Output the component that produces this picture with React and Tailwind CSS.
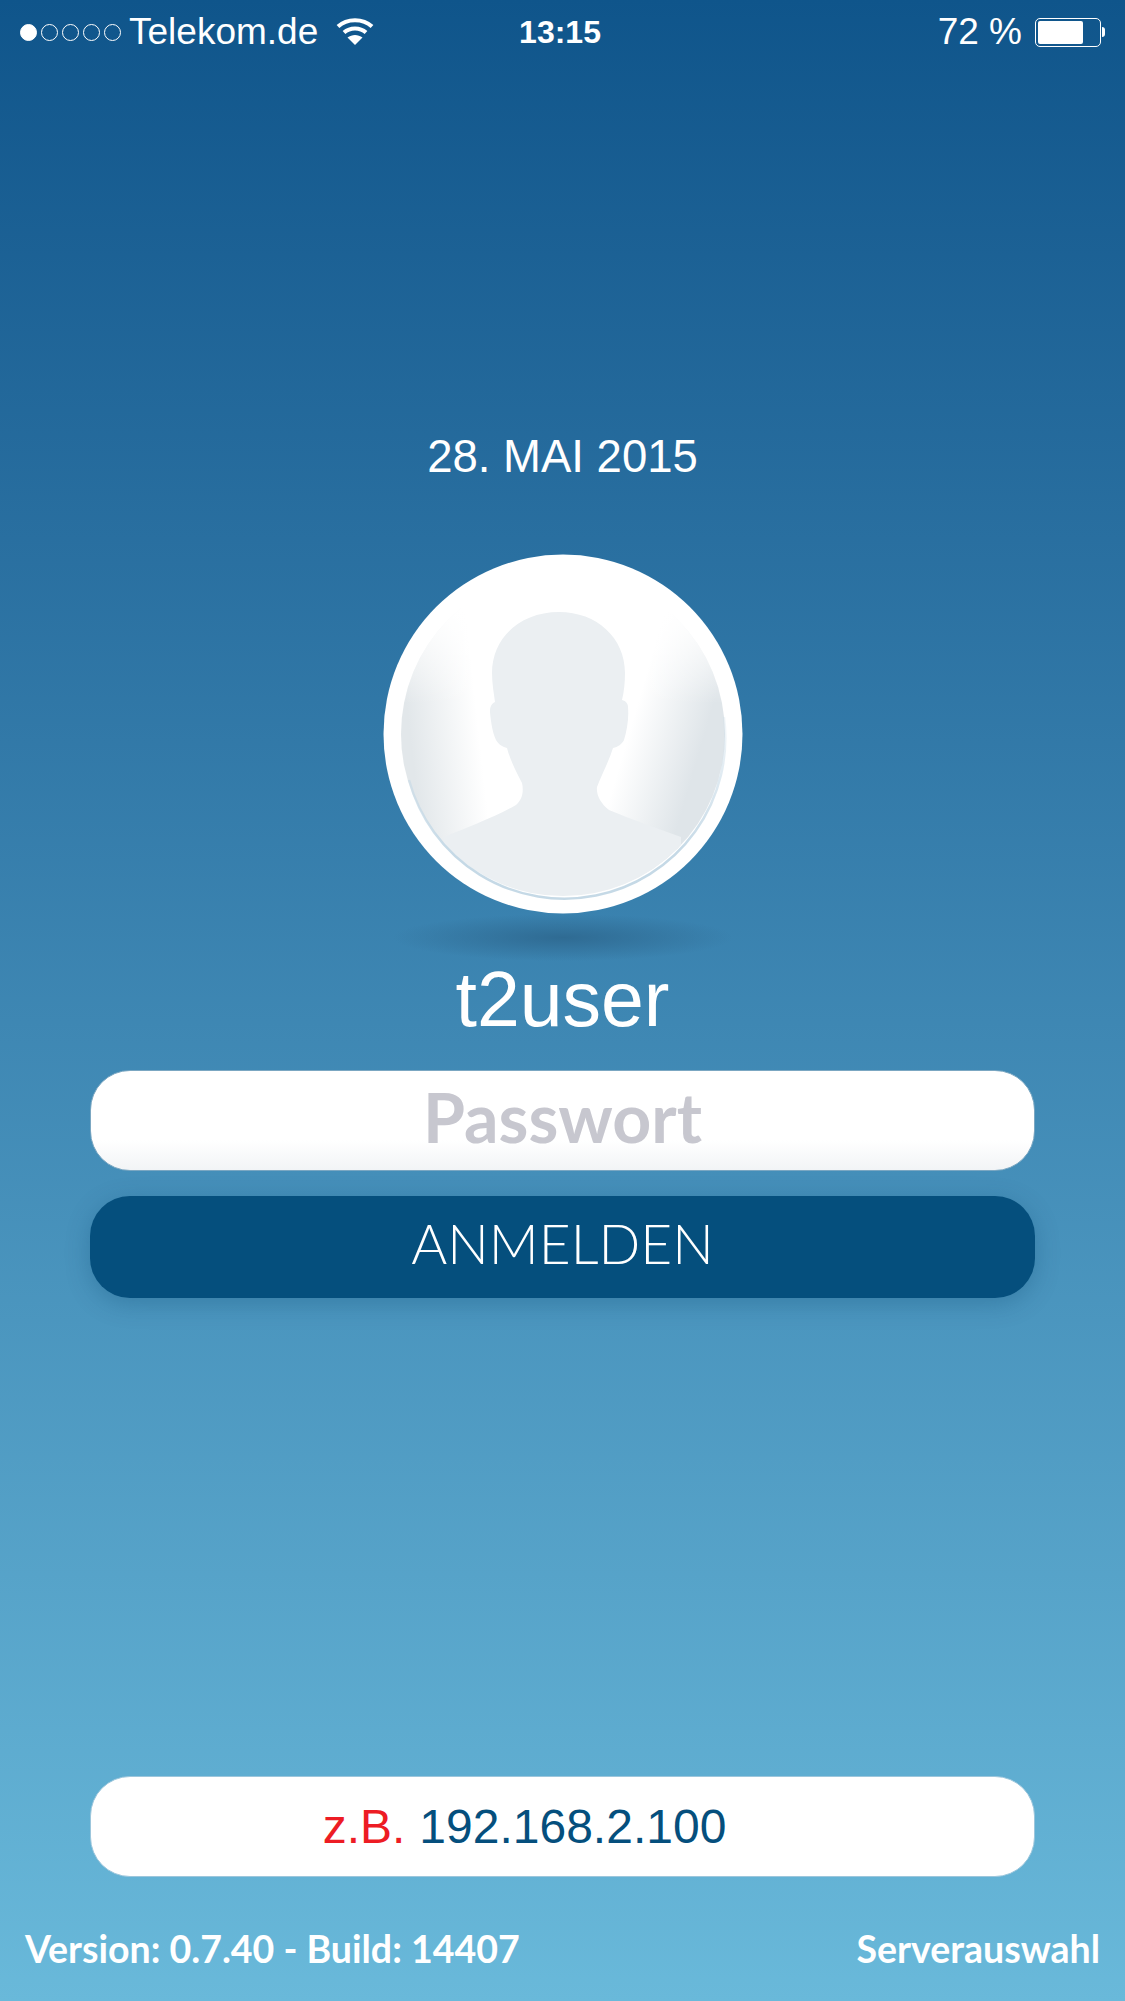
const dots = [true, false, false, false, false]

function StatusBar() {
  return (
    <div className="h-[64px] flex items-center px-[20px] text-white text-[37px] font-['Liberation_Sans',sans-serif]">
      <div className="flex-1 flex items-center">
        <div className="flex gap-[4px]">
          {dots.map((on, i) => (
            <span
              key={i}
              className={`w-[17px] h-[17px] rounded-full border border-white ${on ? 'bg-white' : ''}`}
            />
          ))}
        </div>
        <span className="ml-[8px]">Telekom.de</span>
        <svg className="ml-[18px] -mt-[3px]" width="38" height="28" viewBox="0 0 38 28" fill="none" stroke="white" strokeWidth="4">
          <path d="M2 9.5C11 1 27 1 36 9.5" />
          <path d="M8 15.5C14 10 24 10 30 15.5" />
          <path d="M19 28L11.5 20.5C16 17 22 17 26.5 20.5Z" fill="white" stroke="none" />
        </svg>
      </div>
      <span className="font-bold text-[32px] pr-[5px]">13:15</span>
      <div className="flex-1 flex items-center justify-end">
        <span>72 %</span>
        <div className="ml-[13px] w-[66px] h-[29px] rounded-[5px] border border-white p-[2px]">
          <div className="w-[45px] h-full bg-white rounded-[2px]" />
        </div>
        <div className="ml-[1px] w-[3px] h-[10px] bg-white rounded-r-full" />
      </div>
    </div>
  )
}

function Avatar() {
  return (
    <svg width="360" height="360" viewBox="0 0 360 360">
      <defs>
        <linearGradient id="left" gradientUnits="userSpaceOnUse" x1="92" y1="143" x2="20" y2="151">
          <stop offset="0" stopColor="#e2e7ea" stopOpacity="0" />
          <stop offset="0.95" stopColor="#e2e7ea" />
        </linearGradient>
        <linearGradient id="right" gradientUnits="userSpaceOnUse" x1="248" y1="172" x2="326" y2="195">
          <stop offset="0" stopColor="#dfe5e9" stopOpacity="0" />
          <stop offset="0.9" stopColor="#dfe5e9" />
        </linearGradient>
        <linearGradient id="top" x1="0" y1="0" x2="0" y2="1" gradientUnits="objectBoundingBox">
          <stop offset="0.35" stopColor="#ffffff" />
          <stop offset="1" stopColor="#ffffff" stopOpacity="0" />
        </linearGradient>
        <linearGradient id="rim" gradientUnits="userSpaceOnUse" x1="0" y1="165" x2="0" y2="300">
          <stop offset="0" stopColor="#c5d9e6" stopOpacity="0.2" />
          <stop offset="1" stopColor="#c5d9e6" />
        </linearGradient>
        <clipPath id="inner">
          <circle cx="180" cy="180" r="162" />
        </clipPath>
      </defs>
      <circle cx="180" cy="180" r="179.5" fill="white" />
      <g clipPath="url(#inner)">
        <rect x="0" y="0" width="360" height="360" fill="white" />
        <rect x="0" y="0" width="180" height="360" fill="url(#left)" />
        <rect x="180" y="0" width="180" height="360" fill="url(#right)" />
        <rect x="0" y="0" width="360" height="150" fill="url(#top)" />
        <path
          fill="#ebeff2"
          d="M176 58C137 58 109 84 109 119C109 130 111 140 112 148C108 150 107 153 107 158C108 170 110 180 113 186C116 191 120 193 124 194C127 206 133 217 139 229C141 238 139 246 133 251C112 263 85 273 61 283L61 360L298 360L298 283C274 274 250 266 226 256C218 250 213 241 214 233C219 220 226 207 230 194C235 193 239 190 241 186C244 176 246 165 245 153C245 150 243 147 239 146C241 138 242 128 242 119C242 84 214 58 176 58Z"
        />
      </g>
      <path
        d="M26 226A161 161 0 0 0 341 163"
        fill="none"
        stroke="url(#rim)"
        strokeWidth="2.5"
      />
    </svg>
  )
}

export default function App() {
  return (
    <div className="w-[1125px] h-[2001px] flex flex-col overflow-hidden bg-gradient-to-b from-[#0f558b] to-[#69b9da]">
      <StatusBar />

      <div className="mt-[367px] text-center text-white text-[45.5px] leading-[52px] font-['Liberation_Sans',sans-serif]">
        28. MAI 2015
      </div>

      <div className="mt-[71px] flex justify-center">
        <Avatar />
      </div>

      <div className="h-[47px] -mb-[4px] mx-auto w-[340px] bg-[radial-gradient(closest-side,#2f6b93,rgba(47,107,147,0))]" />

      <div className="text-center text-white text-[77px] leading-[84px] font-['Liberation_Sans',sans-serif]">
        t2user
      </div>

      <div className="mt-[29px] mx-[90px] h-[101px] pb-[8px] rounded-[40px] border border-[#7ba7c2] bg-gradient-to-b from-white from-70% to-[#f2f4f6] flex items-center justify-center text-[#c7c7cf] text-[68px] font-bold font-['Lato',sans-serif]">
        Passwort
      </div>

      <button className="mt-[25px] mx-[90px] h-[102px] pb-[7px] rounded-[40px] bg-[#054f7d] shadow-[0_6px_24px_rgba(5,60,100,0.25)] flex items-center justify-center text-white text-[55px] font-light font-['Lato',sans-serif]">
        ANMELDEN
      </button>

      <div className="mt-auto mx-[90px] h-[101px] rounded-[40px] border border-[#9cc6dc] bg-white flex items-center justify-center pr-[76px] text-[48px] font-['Liberation_Sans',sans-serif]">
        <span className="text-[#ed1c24]">z.B.</span>
        <span className="ml-[14px] text-[#054f7d]">192.168.2.100</span>
      </div>

      <div className="mt-[48px] mb-[29px] px-[25px] flex items-center justify-between text-white text-[37.5px] leading-[47px] font-bold font-['Lato',sans-serif]">
        <span>Version: 0.7.40 - Build: 14407</span>
        <span>Serverauswahl</span>
      </div>
    </div>
  )
}
